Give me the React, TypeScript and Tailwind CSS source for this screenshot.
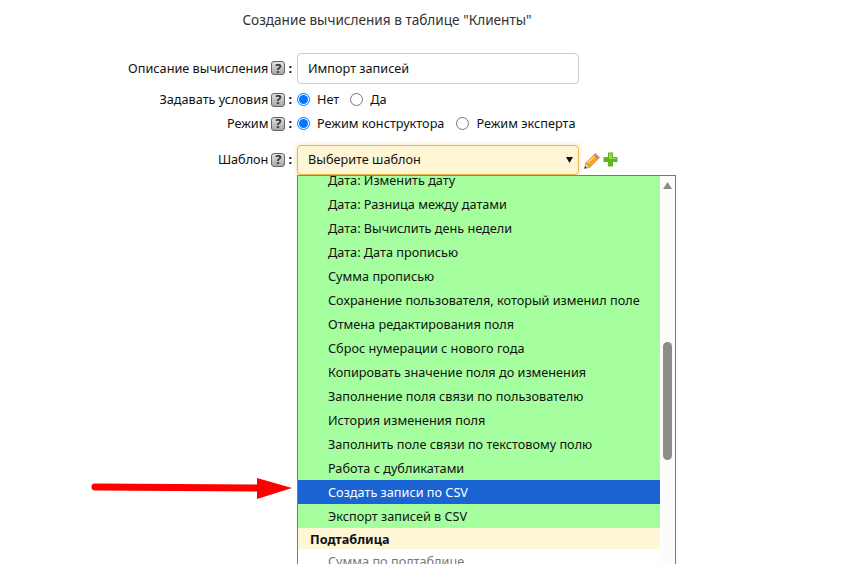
import React from "react";

const rows = [
  "Дата: Изменить дату",
  "Дата: Разница между датами",
  "Дата: Вычислить день недели",
  "Дата: Дата прописью",
  "Сумма прописью",
  "Сохранение пользователя, который изменил поле",
  "Отмена редактирования поля",
  "Сброс нумерации с нового года",
  "Копировать значение поля до изменения",
  "Заполнение поля связи по пользователю",
  "История изменения поля",
  "Заполнить поле связи по текстовому полю",
  "Работа с дубликатами",
];

function Help() {
  return (
    <span className="inline-flex h-[14px] w-[14px] items-center justify-center rounded-[3px] border border-[#666] bg-gradient-to-b from-[#e2e2e2] to-[#a8a8a8] text-[13px] leading-none font-bold text-[#333]">
      ?
    </span>
  );
}

function Label({ text }: { text: string }) {
  return (
    <div className="flex w-[292px] shrink-0 items-center justify-end gap-[3px]">
      <span>{text}</span>
      <Help />
      <span className="font-bold">:</span>
    </div>
  );
}

function Radio({ checked }: { checked?: boolean }) {
  return (
    <span
      className={
        checked
          ? "flex h-[13px] w-[13px] items-center justify-center rounded-full border border-[#0075ff] bg-white"
          : "block h-[13px] w-[13px] rounded-full border border-[#767676] bg-white"
      }
    >
      {checked && <span className="block h-[9px] w-[9px] rounded-full bg-[#0075ff]" />}
    </span>
  );
}

function Pencil() {
  return (
    <svg width="16" height="16" viewBox="0 0 16 16">
      <path d="M.5 15.5 L1.8 10 L6 14.2 Z" fill="#f3d9a8" stroke="#666" strokeWidth="0.5" />
      <path d="M.5 15.5 L1.1 13 L3 14.9 Z" fill="#333" />
      <path d="M1.8 10 L10 2 L14 6 L6 14.2 Z" fill="#f5a623" stroke="#c77f12" strokeWidth="0.7" />
      <path d="M3.5 10 L11 3" stroke="#fcd76f" strokeWidth="1.6" />
      <path d="M10 2 L11.5 .5 L15.5 4.5 L14 6 Z" fill="#e58c8c" stroke="#b06060" strokeWidth="0.6" />
    </svg>
  );
}

function Plus() {
  return (
    <svg width="15" height="15" viewBox="0 0 15 15">
      <path d="M5 .5 H10 V5 H14.5 V10 H10 V14.5 H5 V10 H.5 V5 H5 Z" fill="#63b521" />
      <path d="M6 1.5 H9 V6 H13.5 V7 H6 Z" fill="#8fdc4a" />
    </svg>
  );
}

export default function App() {
  return (
    <div className="relative h-[564px] w-[847px] overflow-hidden bg-white font-['Noto_Sans',sans-serif] text-[12.7px] text-[#111]">
      <div className="w-[774px] pt-[10px] text-center text-[13.6px] leading-[19px] text-[#333]">
        Создание вычисления в таблице "Клиенты"
      </div>

      <div className="mt-[24px] flex h-[31px] items-center">
        <Label text="Описание вычисления" />
        <div className="ml-[5px] flex h-[31px] w-[282px] items-center rounded-[4px] border border-[#ccc] bg-white pl-[10px]">
          Импорт записей
        </div>
      </div>

      <div className="mt-[4px] flex h-[24px] items-center">
        <Label text="Задавать условия" />
        <div className="ml-[5px] flex items-center">
          <Radio checked />
          <span className="ml-[7px]">Нет</span>
          <span className="ml-[11px]"><Radio /></span>
          <span className="ml-[7px]">Да</span>
        </div>
      </div>

      <div className="flex h-[24px] items-center">
        <Label text="Режим" />
        <div className="ml-[5px] flex items-center">
          <Radio checked />
          <span className="ml-[7px]">Режим конструктора</span>
          <span className="ml-[12px]"><Radio /></span>
          <span className="ml-[7px]">Режим эксперта</span>
        </div>
      </div>

      <div className="mt-[9px] flex h-[30px] items-center">
        <Label text="Шаблон" />
        <div className="ml-[5px] flex h-[30px] w-[282px] items-center justify-between rounded-[4px] border border-[#f0b849] bg-[#fff6d6] pr-[5px] pl-[10px] shadow-[0_0_4px_rgba(240,184,73,0.5)]">
          <span>Выберите шаблон</span>
          <svg width="7" height="6" viewBox="0 0 7 6"><path d="M0 0 H7 L3.5 6 Z" fill="#111" /></svg>
        </div>
        <div className="ml-[5px] flex items-center gap-[3px]">
          <span className="mt-[2px]"><Pencil /></span>
          <span className="-mt-[1px]"><Plus /></span>
        </div>
      </div>

      <div className="ml-[297px] flex h-[390px] w-[379px] overflow-hidden border-x border-t border-x-[#777] border-t-[#777]">
        <div className="w-[362px] shrink-0 overflow-hidden">
          <div className="-mt-[8px]">
            {rows.map((r) => (
              <div key={r} className="h-[24px] bg-[#a6ff9f] pl-[30px] leading-[24px]">
                {r}
              </div>
            ))}
            <div className="h-[24px] bg-[#1a63d2] pl-[30px] leading-[24px] text-white">Создать записи по CSV</div>
            <div className="h-[24px] bg-[#a6ff9f] pl-[30px] leading-[24px]">Экспорт записей в CSV</div>
            <div className="h-[21px] bg-[#fff6d6] pl-[12px] leading-[22px] font-bold">Подтаблица</div>
            <div className="h-[24px] pl-[30px] leading-[24px] text-[#777]">Сумма по подтаблице</div>
          </div>
        </div>
        <div className="relative flex-1 bg-[#fcfcfc]">
          <svg className="absolute top-[6px] left-[3px]" width="9" height="7" viewBox="0 0 9 7">
            <path d="M4.5 0 L9 7 H0 Z" fill="#8c8c8c" />
          </svg>
          <div className="absolute top-[166px] left-[3px] h-[118px] w-[9px] rounded-full bg-[#8c8c8c]" />
        </div>
      </div>

      <svg className="absolute top-[476px] left-[90px]" width="204" height="24" viewBox="0 0 204 24">
        <path d="M5 11 L168 12" stroke="#ff0000" strokeWidth="7" strokeLinecap="round" />
        <path d="M167 2 L202 12 L167 23 Z" fill="#ff0000" />
      </svg>
    </div>
  );
}
